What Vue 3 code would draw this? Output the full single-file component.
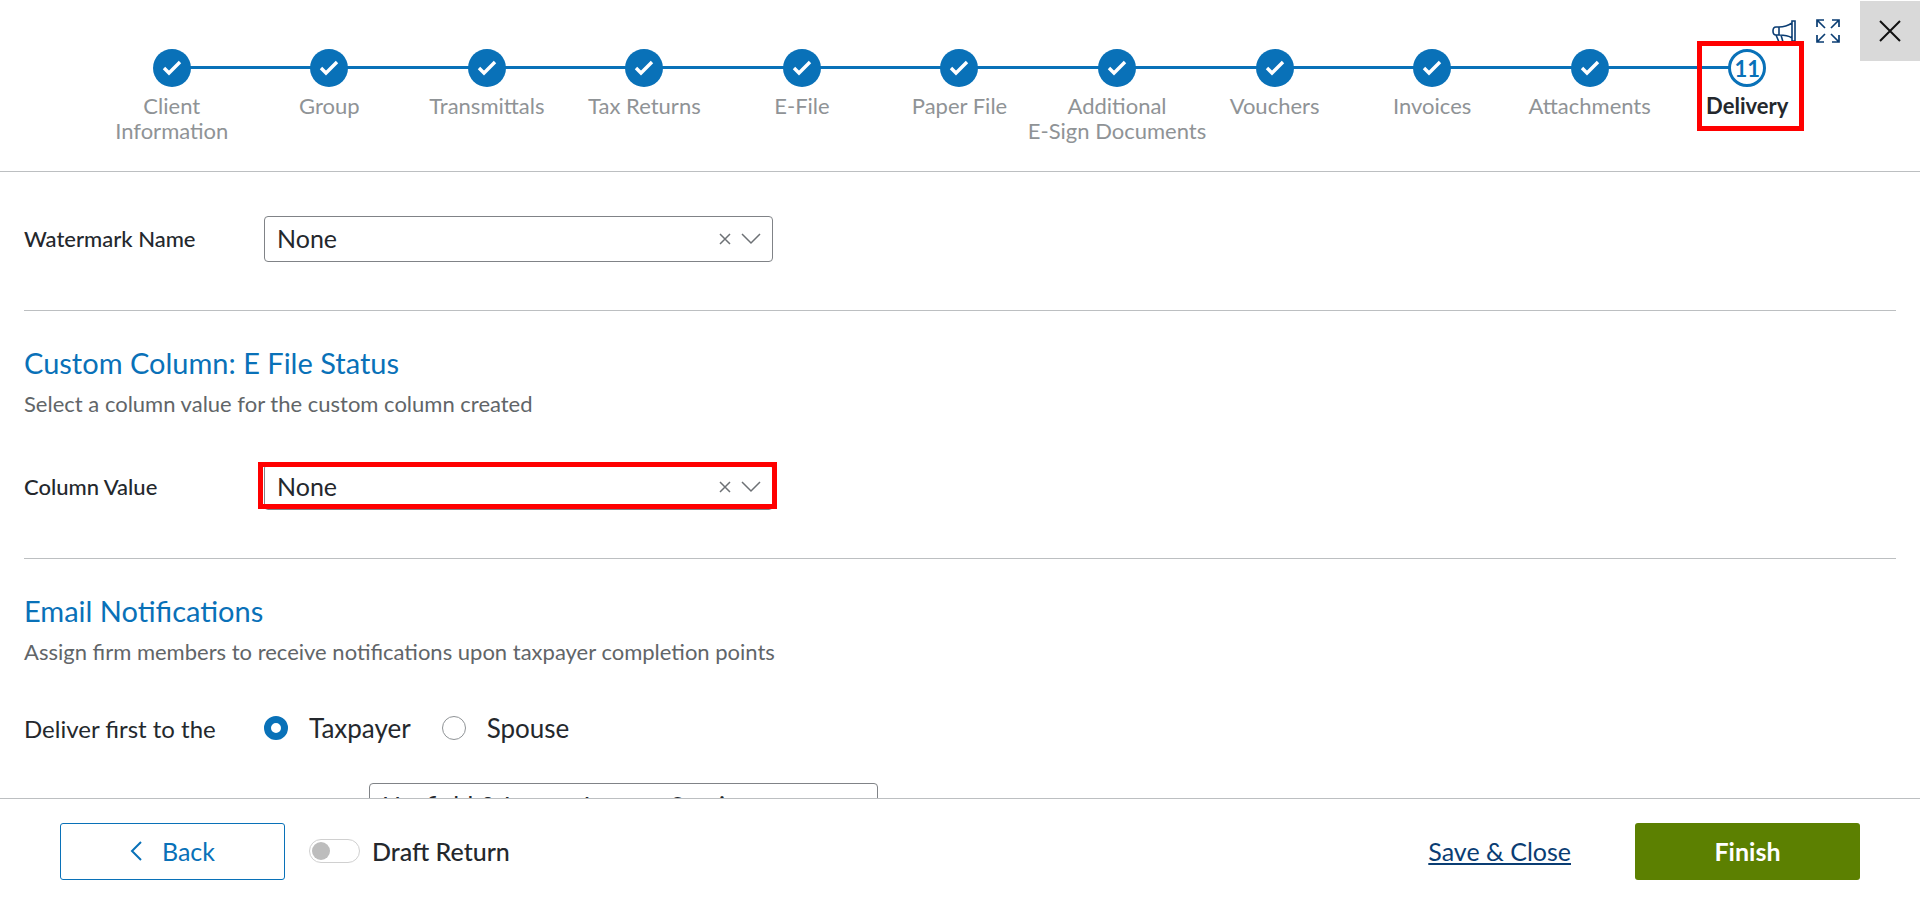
<template>
  <div class="wizard">
    <header class="wizard-header">
      <ol class="steps">
        <li
          v-for="(step, index) in steps"
          :key="index"
          class="step"
          :class="{ active: index === currentStep }"
        >
          <span class="step-circle">
            <svg v-if="index < currentStep" viewBox="0 0 20 16" width="20" height="16">
              <path d="M2 8 7 13 18 2" fill="none" stroke="#fff" stroke-width="3.4" />
            </svg>
            <template v-else>{{ index + 1 }}</template>
          </span>
          <span v-for="line in step" :key="line" class="step-label">{{ line }}</span>
        </li>
      </ol>
      <div class="header-tools">
        <button type="button" class="tool" aria-label="Announcements">
          <svg viewBox="0 0 24 24" width="24" height="24" fill="none" stroke="#0a3d73" stroke-width="1.6">
            <path d="M20 2h3v20h-3zM20 4C17 6 13 8 7 8v8c6 0 10 1 13 3M7 8H4C0 8 0 16 4 16h3M4 16l3 7h4l-2-7" />
          </svg>
        </button>
        <button type="button" class="tool" aria-label="Full screen">
          <svg viewBox="0 0 24 24" width="24" height="24" fill="none" stroke="#0a3d73" stroke-width="1.7">
            <path d="M1 8V1h7M1 1l8 8M16 1h7v7M23 1l-8 8M1 16v7h7M1 23l8-8M16 23h7v-7M23 23l-8-8" />
          </svg>
        </button>
        <button type="button" class="close" aria-label="Close">
          <svg viewBox="0 0 22 22" width="22" height="22" fill="none" stroke="#111" stroke-width="2">
            <path d="M1 1l20 20M21 1 1 21" />
          </svg>
        </button>
      </div>
    </header>

    <main class="wizard-body">
      <section class="section">
        <div class="field">
          <label for="watermark" class="field-label">Watermark Name</label>
          <div class="select-box">
            <select id="watermark" v-model="watermark">
              <option>None</option>
            </select>
            <button type="button" class="clear" aria-label="Clear watermark" @click="watermark = 'None'">
              <svg viewBox="0 0 12 12" width="12" height="12"><path d="M1 1l10 10M11 1 1 11" /></svg>
            </button>
            <svg class="chevron" viewBox="0 0 20 12" width="20" height="12"><path d="M1 1l9 9 9-9" /></svg>
          </div>
        </div>
      </section>

      <section class="section">
        <h2>Custom Column: E File Status</h2>
        <p>Select a column value for the custom column created</p>
        <div class="field">
          <label for="column" class="field-label">Column Value</label>
          <div class="select-box highlighted">
            <select id="column" v-model="columnValue">
              <option>None</option>
            </select>
            <button type="button" class="clear" aria-label="Clear column value" @click="columnValue = 'None'">
              <svg viewBox="0 0 12 12" width="12" height="12"><path d="M1 1l10 10M11 1 1 11" /></svg>
            </button>
            <svg class="chevron" viewBox="0 0 20 12" width="20" height="12"><path d="M1 1l9 9 9-9" /></svg>
          </div>
        </div>
      </section>

      <section class="section">
        <h2>Email Notifications</h2>
        <p>Assign firm members to receive notifications upon taxpayer completion points</p>
        <div class="field" role="radiogroup" aria-labelledby="deliver-label">
          <span id="deliver-label" class="field-label large">Deliver first to the</span>
          <label v-for="name in recipients" :key="name" class="radio">
            <input v-model="deliverTo" type="radio" name="deliver" :value="name" />
            {{ name }}
          </label>
        </div>
        <div class="field recipient">
          <label for="firm" class="field-label">Email</label>
          <div class="select-box">
            <select id="firm" v-model="firm">
              <option>Hayfield &amp; Larson Income Service</option>
            </select>
          </div>
        </div>
      </section>
    </main>

    <footer class="wizard-footer">
      <button type="button" class="btn back">
        <svg viewBox="0 0 12 20" width="12" height="20" fill="none" stroke="#0971b8" stroke-width="2">
          <path d="M11 1 2 10l9 9" />
        </svg>
        Back
      </button>
      <label class="toggle">
        <input v-model="draft" type="checkbox" role="switch" />
        Draft Return
      </label>
      <a href="#" class="save" @click.prevent>Save &amp; Close</a>
      <button type="button" class="btn finish">Finish</button>
    </footer>
  </div>
</template>

<script setup>
import { ref } from 'vue';

const steps = [
  ['Client', 'Information'],
  ['Group'],
  ['Transmittals'],
  ['Tax Returns'],
  ['E-File'],
  ['Paper File'],
  ['Additional', 'E-Sign Documents'],
  ['Vouchers'],
  ['Invoices'],
  ['Attachments'],
  ['Delivery'],
];
const recipients = ['Taxpayer', 'Spouse'];

const currentStep = ref(10);
const watermark = ref('None');
const columnValue = ref('None');
const deliverTo = ref('Taxpayer');
const firm = ref('Hayfield & Larson Income Service');
const draft = ref(false);
</script>

<style>
body {
  margin: 0;
}
</style>

<style scoped>
.wizard {
  display: flex;
  flex-direction: column;
  height: 100vh;
  overflow: hidden;
  background: #fff;
  color: #24282d;
  font-family: Lato, 'Open Sans', sans-serif;
  font-size: 22px;
  line-height: 25px;
}

.wizard *,
.wizard *::before,
.wizard *::after {
  box-sizing: border-box;
}

button,
select {
  font: inherit;
  color: inherit;
}

button {
  padding: 0;
  border: 0;
  background: none;
}

.wizard-header {
  position: relative;
  flex: none;
  min-height: 172px;
  padding: 49px 94px 0 93px;
  border-bottom: 1px solid #bcbfc1;
}

.steps {
  display: grid;
  grid-template-columns: repeat(11, minmax(0, 1fr));
  margin: 0;
  padding: 0;
  list-style: none;
}

.step {
  position: relative;
  display: flex;
  flex-direction: column;
  align-items: center;
}

/* connector to the previous step */
.step + .step::before {
  content: '';
  position: absolute;
  top: 17px;
  right: 50%;
  width: 100%;
  height: 3px;
  background: #0971b8;
}

.step-circle {
  position: relative;
  z-index: 1;
  display: flex;
  align-items: center;
  justify-content: center;
  width: 38px;
  height: 38px;
  margin-bottom: 6px;
  border-radius: 50%;
  background: #0971b8;
}

.step-label {
  color: #8f9396;
  white-space: nowrap;
}

.step.active .step-circle {
  border: 3px solid #0971b8;
  background: #fff;
  color: #0971b8;
  font-weight: 700;
}

.step.active .step-label {
  color: #24282d;
  font-weight: 700;
}

.step.active::after {
  content: '';
  position: absolute;
  z-index: 3;
  top: -8px;
  left: 29px;
  right: 22px;
  height: 90px;
  border: 5px solid #f00;
  pointer-events: none;
}

.header-tools {
  position: absolute;
  top: 1px;
  right: 0;
  display: flex;
  align-items: flex-start;
  gap: 20px;
}

.tool {
  height: 60px;
}

.tool svg,
.close svg {
  display: block;
}

.close {
  display: flex;
  align-items: center;
  justify-content: center;
  width: 60px;
  height: 60px;
  background: #d9d9d9;
}

.wizard-body {
  flex: 1;
  min-height: 0;
  padding: 0 24px;
  overflow: hidden;
}

.section {
  padding: 35px 0 48px;
  border-bottom: 1px solid #bcbfc1;
}

.section:first-child {
  padding-top: 44px;
}

.section:last-child {
  border: 0;
}

h2 {
  margin: 0 0 11px;
  color: #0971b8;
  font-size: 29px;
  font-weight: 400;
  line-height: 34px;
}

p {
  margin: 0 0 48px;
  color: #616568;
}

.section:last-child p {
  margin-bottom: 41px;
}

.field {
  display: flex;
  align-items: center;
  min-height: 46px;
}

.field-label {
  width: 240px;
  padding-bottom: 2px;
  font-weight: 500;
}

.field-label.large {
  padding: 0;
  font-size: 24px;
  font-weight: 400;
}

.select-box {
  position: relative;
  width: 509px;
  height: 46px;
}

.select-box select {
  width: 100%;
  height: 100%;
  padding: 0 72px 2px 12px;
  appearance: none;
  border: 1px solid #808387;
  border-radius: 4px;
  background: #fff;
  font-size: 25px;
}

.select-box.highlighted::after {
  content: '';
  position: absolute;
  inset: -2px -4px 1px -6px;
  border: 5px solid #f00;
  pointer-events: none;
}

.clear,
.chevron {
  position: absolute;
  top: 17px;
  fill: none;
  stroke: #6d7175;
  stroke-width: 1.5;
}

.clear {
  right: 42px;
  height: 12px;
}

.clear svg {
  display: block;
}

.chevron {
  right: 12px;
  pointer-events: none;
}

.radio {
  display: flex;
  align-items: center;
  gap: 21px;
  margin-right: 31px;
  font-size: 26px;
}

.radio input {
  width: 24px;
  height: 24px;
  margin: 0;
  appearance: none;
  border: 1px solid #8f9396;
  border-radius: 50%;
}

.radio input:checked {
  border: 7px solid #0971b8;
}

.recipient {
  margin-top: 32px;
}

.recipient .field-label {
  width: 345px;
  padding: 0;
}

.wizard-footer {
  display: flex;
  flex: none;
  align-items: center;
  height: 99px;
  padding: 6px 60px 0;
  border-top: 1px solid #bcbfc1;
  background: #fff;
  font-size: 25px;
}

.btn {
  display: flex;
  align-items: center;
  justify-content: center;
  width: 225px;
  height: 57px;
  border-radius: 3px;
}

.back {
  gap: 20px;
  border: 1px solid #0971b8;
  color: #0971b8;
}

.toggle {
  display: flex;
  align-items: center;
  gap: 12px;
  margin-left: 24px;
  font-weight: 500;
}

.toggle input {
  width: 51px;
  height: 24px;
  margin: 0;
  padding: 2px;
  appearance: none;
  border: 1px solid #d0d0d0;
  border-radius: 12px;
}

.toggle input::before {
  content: '';
  display: block;
  width: 18px;
  height: 18px;
  border-radius: 50%;
  background: #bdbdbd;
}

.toggle input:checked::before {
  margin-left: auto;
  background: #0971b8;
}

.save {
  margin-left: auto;
  margin-right: 64px;
  color: #0a3d73;
}

.finish {
  background: #5c8001;
  color: #fff;
  font-weight: 700;
}
</style>
